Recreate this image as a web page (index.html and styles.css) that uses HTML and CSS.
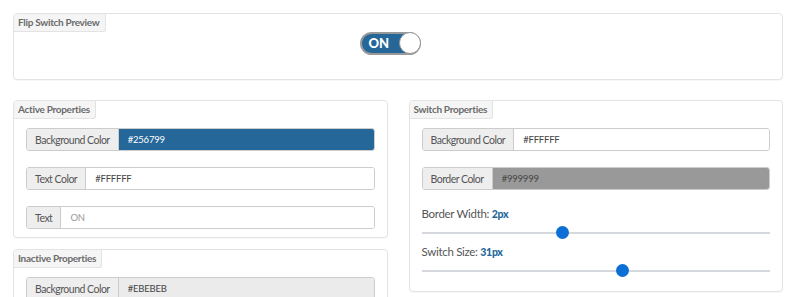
FILE: index.html
```html
<!DOCTYPE html>
<html>
    <head>
        <title>Flip Switch Builder</title>
        <link rel="stylesheet" href="styles.css">
    </head>
    <body>
        <div class="page">
            <div class="panel preview">
                <div class="legend">Flip Switch Preview</div>
                <div class="preview-body">
                    <div class="switch">
                        <span class="switch-text">ON</span>
                        <span class="knob"></span>
                    </div>
                </div>
            </div>

            <div class="columns">
                <div class="column">
                    <div class="panel">
                        <div class="legend">Active Properties</div>
                        <div class="panel-body">
                            <div class="group">
                                <span class="addon">Background Color</span>
                                <input class="value value-blue" type="text" value="#256799">
                            </div>
                            <div class="group">
                                <span class="addon">Text Color</span>
                                <input class="value" type="text" value="#FFFFFF">
                            </div>
                            <div class="group">
                                <span class="addon">Text</span>
                                <input class="value" type="text" placeholder="ON">
                            </div>
                        </div>
                    </div>
                    <div class="panel">
                        <div class="legend">Inactive Properties</div>
                        <div class="panel-body">
                            <div class="group">
                                <span class="addon">Background Color</span>
                                <input class="value value-light" type="text" value="#EBEBEB">
                            </div>
                            <div class="group">
                                <span class="addon">Text Color</span>
                                <input class="value" type="text" value="#999999">
                            </div>
                        </div>
                    </div>
                </div>

                <div class="column">
                    <div class="panel">
                        <div class="legend">Switch Properties</div>
                        <div class="panel-body">
                            <div class="group">
                                <span class="addon">Background Color</span>
                                <input class="value" type="text" value="#FFFFFF">
                            </div>
                            <div class="group">
                                <span class="addon">Border Color</span>
                                <input class="value value-grey" type="text" value="#999999">
                            </div>
                            <div class="range-field">
                                <label>Border Width: <b>2px</b></label>
                                <input type="range" min="0" max="5" value="2">
                            </div>
                            <div class="range-field">
                                <label>Switch Size: <b>31px</b></label>
                                <input type="range" min="20" max="39" value="31">
                            </div>
                        </div>
                    </div>
                </div>
            </div>
        </div>
    </body>
</html>
```

FILE: styles.css
```css
body {
    font-family: Lato, "Open Sans", sans-serif;
    background-color: #fff;
    margin: 0;
    padding: 13px;
    color: #555;
}
.page {
    width: 770px;
}
.panel {
    border: 1px solid #e3e3e3;
    border-radius: 4px;
    background-color: #fff;
    box-shadow: 0 1px 1px rgba(0, 0, 0, 0.03);
}
.legend {
    width: fit-content;
    height: 17px;
    line-height: 17px;
    padding: 0 5px 0 4px;
    background-color: #f5f5f5;
    border-right: 1px solid #e3e3e3;
    border-bottom: 1px solid #e3e3e3;
    border-radius: 3px 0 3px 0;
    font-size: 10px;
    font-weight: bold;
    color: #6b6b6b;
    letter-spacing: -0.3px;
}
.preview {
    height: 65px;
}
.preview-body {
    display: flex;
    justify-content: center;
    padding-right: 16px;
}
.switch {
    position: relative;
    width: 57px;
    height: 19px;
    border: 2px solid #999;
    border-radius: 12px;
    background-color: #256799;
}
.switch-text {
    display: block;
    padding-left: 7px;
    line-height: 19px;
    font-size: 13px;
    font-weight: 900;
    color: #fff;
}
.knob {
    position: absolute;
    right: -2px;
    top: -2px;
    width: 20px;
    height: 20px;
    border: 1.5px solid #999;
    border-radius: 50%;
    background-color: #fff;
}
.columns {
    display: flex;
    gap: 21px;
    margin-top: 20px;
}
.column {
    flex: 1;
    display: flex;
    flex-direction: column;
    gap: 11px;
}
.panel-body {
    display: flex;
    flex-direction: column;
    gap: 16px;
    padding: 9px 12px 8px;
}
.group {
    display: flex;
    height: 21px;
    border: 1px solid #ccc;
    border-radius: 3px;
    overflow: hidden;
}
.addon {
    display: flex;
    align-items: center;
    padding: 0 8px;
    background-color: #eee;
    border-right: 1px solid #ccc;
    font-size: 10.5px;
    letter-spacing: -0.5px;
    color: #555;
    white-space: nowrap;
}
.value {
    flex: 1;
    min-width: 0;
    border: none;
    padding: 0 9px;
    font-family: Lato, "Open Sans", sans-serif;
    font-size: 9.5px;
    letter-spacing: -0.2px;
    color: #444;
    background-color: #fff;
    outline: none;
}
.value::placeholder {
    color: #999;
}
.value-blue {
    background-color: #256799;
    color: #fff;
}
.value-grey {
    background-color: #999;
    color: #444;
}
.value-light {
    background-color: #ebebeb;
}
.range-field label {
    display: block;
    font-size: 11.5px;
    line-height: 16px;
    letter-spacing: -0.3px;
    color: #555;
}
.range-field label b {
    color: #256799;
    font-size: 10.5px;
    font-weight: 900;
}
.range-field input[type="range"] {
    -webkit-appearance: none;
    appearance: none;
    display: block;
    width: 100%;
    height: 13px;
    margin: 4px 0 0;
    background: transparent;
}
.range-field + .range-field {
    margin-top: -11px;
}
.range-field:last-child {
    padding-bottom: 6px;
}
input[type="range"]::-webkit-slider-runnable-track {
    height: 2px;
    background-color: #d5d8dc;
}
input[type="range"]::-webkit-slider-thumb {
    -webkit-appearance: none;
    width: 13px;
    height: 13px;
    margin-top: -5.5px;
    border: none;
    border-radius: 50%;
    background-color: #0b6fd6;
}
```
